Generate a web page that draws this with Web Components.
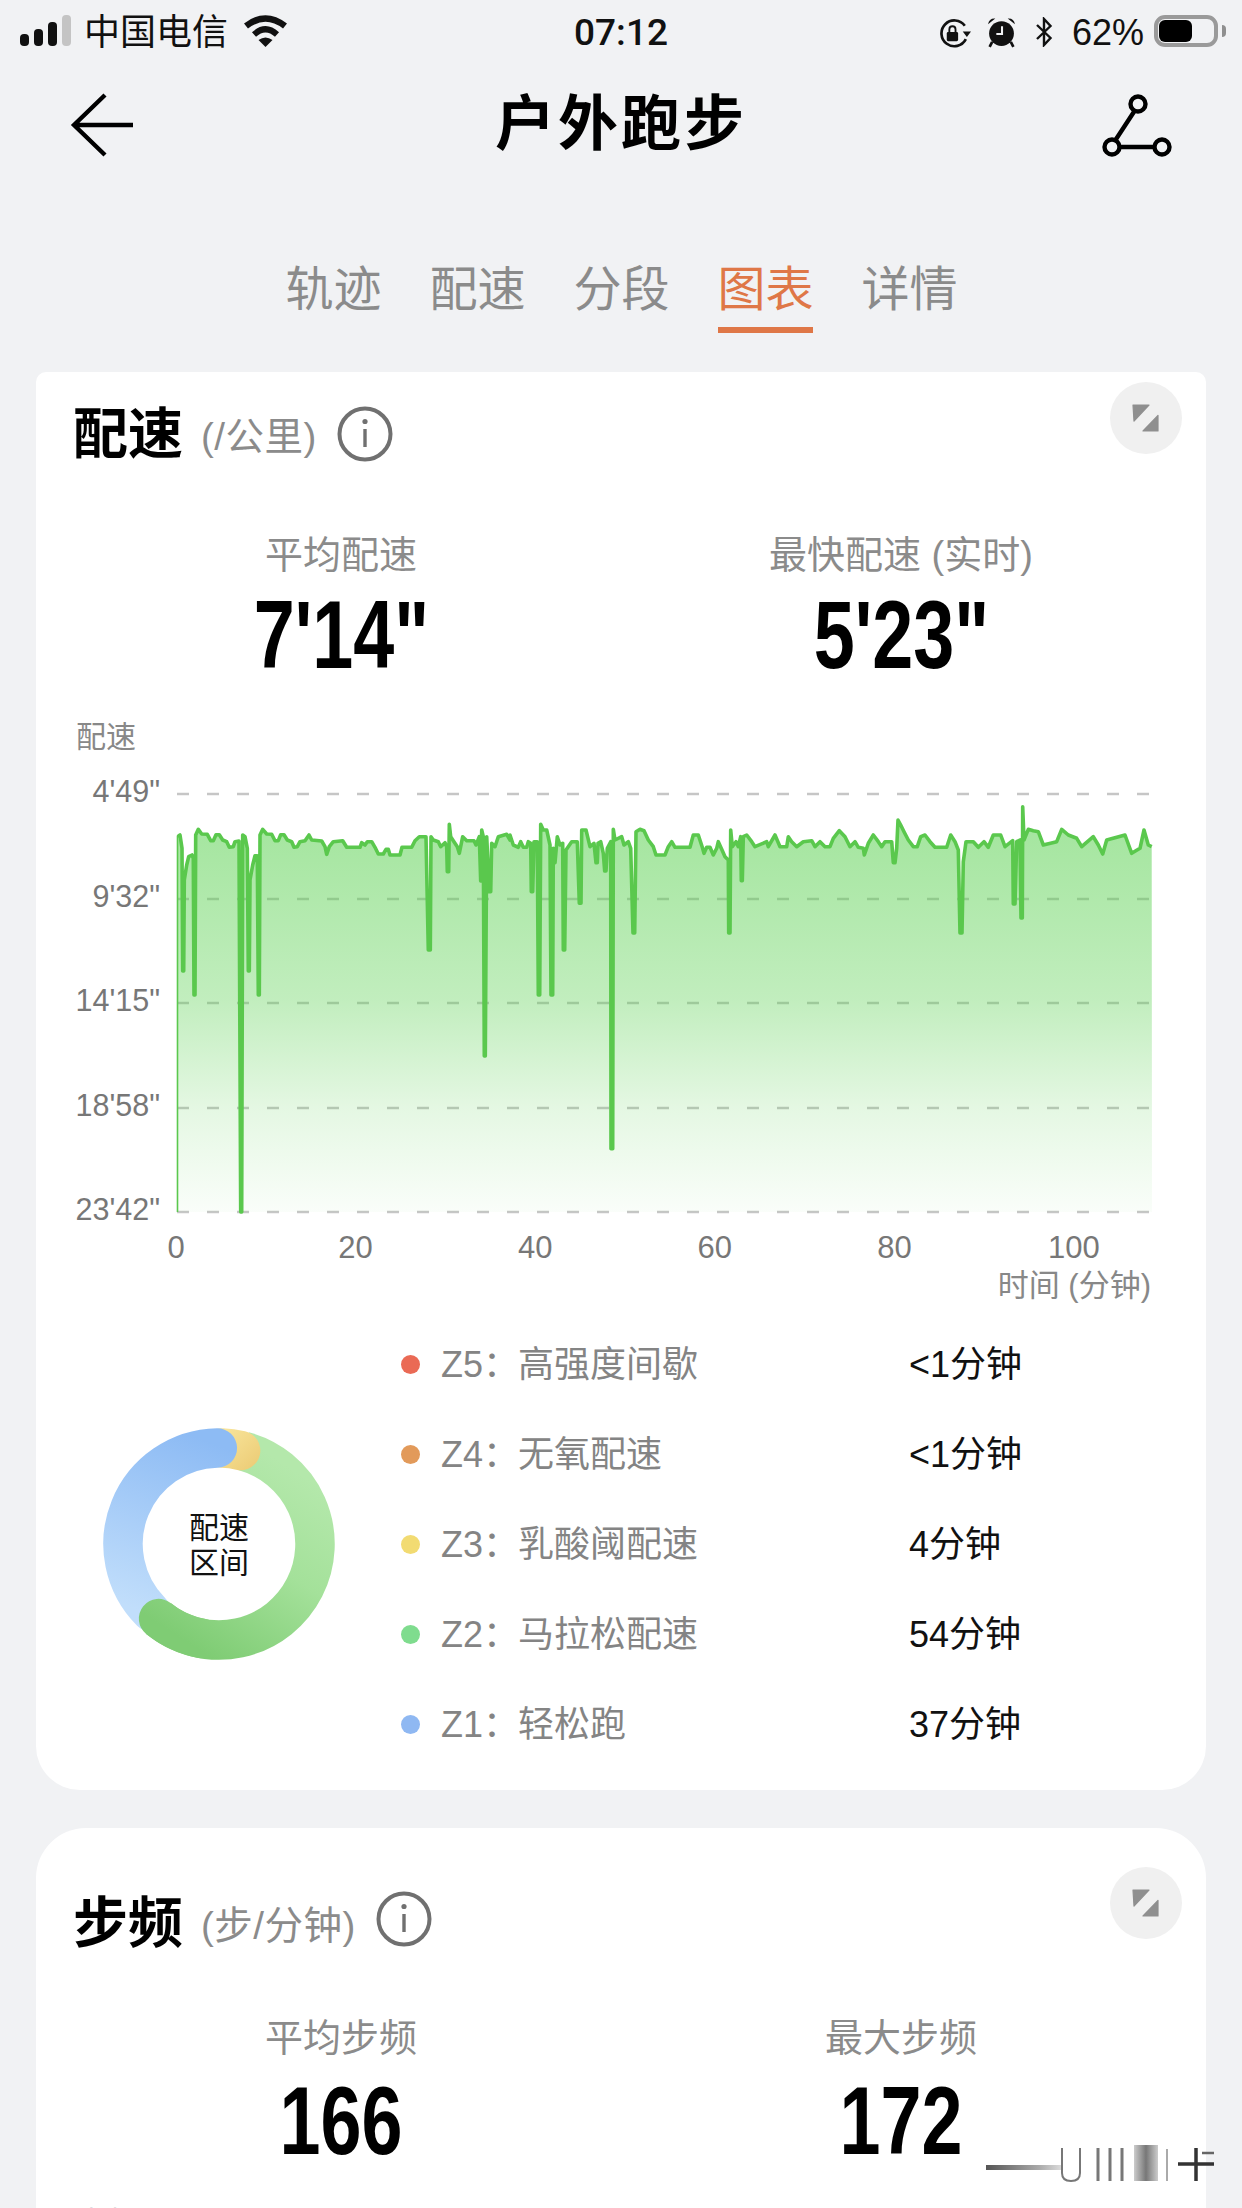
<!DOCTYPE html>
<html lang="zh-CN">
<head>
<meta charset="utf-8">
<title>户外跑步</title>
<style>
    html, body { margin: 0; padding: 0; background: #f1f2f4; }
    body { width: 1242px; height: 2208px; overflow: hidden; font-family: "Liberation Sans", "Noto Sans CJK SC", sans-serif; }
</style>
</head>
<body>
<run-page>
    <status-bar></status-bar>
    <nav-bar>户外跑步</nav-bar>
    <tab-strip tabs="轨迹,配速,分段,图表,详情" active="3"></tab-strip>

    <metric-card style="--card-top:10px; --title-top:22px; --radius-top:10px; --radius-bottom:44px; --stats-gap:66px;">
        <span slot="title">配速</span>
        <span slot="unit">(/公里)</span>
        <stat-item label="平均配速" value="7'14&quot;"></stat-item>
        <stat-item label="最快配速 (实时)" value="5'23&quot;"></stat-item>
        <div slot="body">
            <pace-chart></pace-chart>
            <zone-panel>
                <zone-row color="#ea6a55" zone="Z5" name="高强度间歇" time="&lt;1分钟"></zone-row>
                <zone-row color="#e29a5a" zone="Z4" name="无氧配速" time="&lt;1分钟"></zone-row>
                <zone-row color="#f2db72" zone="Z3" name="乳酸阈配速" time="4分钟"></zone-row>
                <zone-row color="#7fdc8e" zone="Z2" name="马拉松配速" time="54分钟"></zone-row>
                <zone-row color="#8fb8f2" zone="Z1" name="轻松跑" time="37分钟"></zone-row>
            </zone-panel>
        </div>
    </metric-card>

    <metric-card style="--card-top:39px; --title-top:26px; --radius-top:50px; --radius-bottom:0px; --stats-gap:60px; --card-gap:38px; --value-gap:10px; --info-top:-8px;">
        <span slot="title">步频</span>
        <span slot="unit">(步/分钟)</span>
        <stat-item label="平均步频" value="166"></stat-item>
        <stat-item label="最大步频" value="172"></stat-item>
        <div slot="body">
            <axis-title>步频</axis-title>
        </div>
    </metric-card>

    <smudge-mark></smudge-mark>
</run-page>

<script>
(function() {
    const CJK = '"Liberation Sans", "Noto Sans CJK SC", sans-serif';

    class RunPage extends HTMLElement {
        constructor() {
            super();
            this.attachShadow({mode: 'open'});
            this.shadowRoot.innerHTML = `
                <style>
                    :host { display: block; position: relative; width: 1242px; height: 2208px; overflow: hidden; background: #f1f2f4; font-family: ${CJK}; }
                </style>
                <slot></slot>
            `;
        }
    }

    class StatusBar extends HTMLElement {
        constructor() {
            super();
            this.attachShadow({mode: 'open'});
            this.shadowRoot.innerHTML = `
                <style>
                    :host { display: grid; grid-template-columns: 1fr auto 1fr; align-items: center; height: 62px; padding: 0 16px 0 20px; color: #111; }
                    .left, .right { display: flex; align-items: center; }
                    .right { justify-content: flex-end; }
                    .bars { display: flex; align-items: flex-end; gap: 5px; height: 31px; margin-top: -3px; }
                    .bars i { display: block; width: 9px; background: #111; border-radius: 4px; }
                    .carrier { font-size: 36px; line-height: 62px; margin-left: 13px; padding-top: 2px; }
                    .wifi { margin-left: 15px; margin-top: -4px; }
                    .time { font: 500 37px Roboto, sans-serif; margin-left: -4px; }
                    .pct { font-size: 36px; line-height: 62px; margin-left: 19px; padding-top: 2px; }
                    .alarm { margin-left: 16px; }
                    .bt { margin-left: 19px; }
                    .batt { margin-left: 10px; display: flex; align-items: center; }
                    .shell { box-sizing: border-box; width: 64px; height: 32px; border: 4px solid #9a9a9a; border-radius: 11px; padding: 1px; margin-top: -2px; }
                    .shell i { display: block; width: 33px; height: 22px; background: #000; border-radius: 6px; }
                    .nub { width: 4px; height: 12px; margin-left: 4px; background: #8f8f8f; border-radius: 0 4px 4px 0; margin-top: -2px; }
                </style>
                <div class="left">
                    <div class="bars">
                        <i style="height:12px"></i><i style="height:17px"></i><i style="height:24px"></i><i style="height:31px;background:#c4c4c4"></i>
                    </div>
                    <span class="carrier">中国电信</span>
                    <svg class="wifi" width="45" height="33" viewBox="0 0 45 33">
                        <path d="M3 12 Q22.5 -3 42 12" fill="none" stroke="#111" stroke-width="6.5"/>
                        <path d="M11 20.5 Q22.5 10 34 20.5" fill="none" stroke="#111" stroke-width="6"/>
                        <path d="M15.5 26 Q22.5 21 29.5 26 L22.5 33Z" fill="#111"/>
                    </svg>
                </div>
                <span class="time">07:12</span>
                <div class="right">
                    <svg width="33" height="29" viewBox="0 0 32 28" style="margin-top:2px">
                        <path d="M27 19.5 A12.5 12.5 0 1 1 26 6.5" fill="none" stroke="#111" stroke-width="2.6"/>
                        <path d="M24 12 L32 12 L28 17.5Z" fill="#111"/>
                        <rect x="8.5" y="12.5" width="11" height="9" rx="1.4" fill="#111"/>
                        <path d="M11 13 V10 a3 3 0 0 1 6 0 V13" fill="none" stroke="#111" stroke-width="1.8"/>
                    </svg>
                    <svg class="alarm" width="29" height="31" viewBox="0 0 28 30">
                        <circle cx="14" cy="16" r="12" fill="#111"/>
                        <path d="M1 7 Q2 1 8 1.5Z M27 7 Q26 1 20 1.5Z" fill="#111"/>
                        <path d="M5 24 L2.5 29 M23 24 L25.5 29" stroke="#111" stroke-width="2.6"/>
                        <path d="M14.5 9 V16.5 H9" fill="none" stroke="#f1f2f4" stroke-width="2"/>
                    </svg>
                    <svg class="bt" width="18" height="30" viewBox="0 0 18 30">
                        <path d="M2 8 L15.5 21 L9 28 V2 L15.5 9 L2 22" fill="none" stroke="#111" stroke-width="2.4"/>
                    </svg>
                    <span class="pct">62%</span>
                    <div class="batt">
                        <div class="shell"><i></i></div>
                        <div class="nub"></div>
                    </div>
                </div>
            `;
        }
    }

    class NavBar extends HTMLElement {
        constructor() {
            super();
            this.attachShadow({mode: 'open'});
            this.shadowRoot.innerHTML = `
                <style>
                    :host { display: grid; grid-template-columns: 1fr auto 1fr; align-items: center; height: 114px; padding: 6px 70px 0; color: #000; }
                    .title { font-size: 60px; font-weight: 700; letter-spacing: 3px; line-height: 114px; }
                    .back { justify-self: start; }
                    .route { justify-self: end; }
                    svg { display: block; }
                </style>
                <svg class="back" width="66" height="66" viewBox="0 0 66 66">
                    <path d="M35 3 L4 33 L35 63 M4 33 H63" fill="none" stroke="#000" stroke-width="4.4"/>
                </svg>
                <span class="title"><slot></slot></span>
                <svg class="route" width="72" height="66" viewBox="0 0 72 66">
                    <circle cx="38" cy="12" r="7.5" fill="none" stroke="#000" stroke-width="4.4"/>
                    <circle cx="12" cy="55" r="7.5" fill="none" stroke="#000" stroke-width="4.4"/>
                    <circle cx="62" cy="55" r="7.5" fill="none" stroke="#000" stroke-width="4.4"/>
                    <path d="M34.5 19 L15.5 48 M19.5 55 H54.5" fill="none" stroke="#000" stroke-width="4.4"/>
                </svg>
            `;
        }
    }

    class TabStrip extends HTMLElement {
        constructor() {
            super();
            this.attachShadow({mode: 'open'});
        }
        connectedCallback() {
            const active = Number(this.getAttribute('active'));
            const tabs = this.getAttribute('tabs').split(',').map((name, i) =>
                `<div class="tab ${i === active ? 'on' : ''}">${name}</div>`).join('');
            this.shadowRoot.innerHTML = `
                <style>
                    :host { display: flex; justify-content: center; gap: 49px; padding-top: 76px; height: 75px; margin-bottom: 39px; }
                    .tab { width: 95px; height: 75px; box-sizing: border-box; font-size: 48px; line-height: 64px; text-align: center; white-space: nowrap; color: #8b8b8b; }
                    .on { color: #df7747; border-bottom: 6px solid #df7747; }
                </style>
                ${tabs}
            `;
        }
    }

    class MetricCard extends HTMLElement {
        constructor() {
            super();
            this.attachShadow({mode: 'open'});
            this.shadowRoot.innerHTML = `
                <style>
                    :host {
                        display: block; margin: var(--card-gap, 0) 36px 0; padding: var(--card-top) 24px 0 25px;
                        background: #fff; border-radius: var(--radius-top) var(--radius-top) var(--radius-bottom) var(--radius-bottom);
                    }
                    .head { display: flex; justify-content: space-between; align-items: flex-start; }
                    .name { display: flex; align-items: center; margin-top: var(--title-top); padding-left: 12px; height: 60px; }
                    .title { font-size: 55px; font-weight: 700; color: #000; line-height: 60px; }
                    .unit { font-size: 38.5px; color: #8b8b8b; margin: 6px 0 0 18px; line-height: 50px; letter-spacing: .5px; }
                    .info { margin: var(--info-top, 0) 0 0 20px; display: block; }
                    .expand { display: block; }
                    .stats { display: grid; grid-template-columns: 560px 560px; margin-top: var(--stats-gap); }
                </style>
                <div class="head">
                    <div class="name">
                        <span class="title"><slot name="title"></slot></span>
                        <span class="unit"><slot name="unit"></slot></span>
                        <svg class="info" width="56" height="56" viewBox="0 0 56 56">
                            <circle cx="28" cy="28" r="25.5" fill="none" stroke="#707070" stroke-width="4"/>
                            <circle cx="28" cy="15.5" r="2.6" fill="#707070"/>
                            <path d="M28 23 V41" stroke="#707070" stroke-width="3.4"/>
                        </svg>
                    </div>
                    <svg class="expand" width="72" height="72" viewBox="0 0 72 72">
                        <circle cx="36" cy="36" r="36" fill="#f0f0f0"/>
                        <path d="M23 23 H39 L24 39Z M48 33.5 V49 H33Z" fill="#8f8f8f" stroke="#8f8f8f" stroke-width="1.2" stroke-linejoin="round"/>
                    </svg>
                </div>
                <div class="stats"><slot></slot></div>
                <slot name="body"></slot>
            `;
        }
    }

    class StatItem extends HTMLElement {
        constructor() {
            super();
            this.attachShadow({mode: 'open'});
        }
        connectedCallback() {
            this.shadowRoot.innerHTML = `
                <style>
                    :host { display: block; text-align: center; }
                    .label { font-size: 38px; line-height: 50px; color: #8b8b8b; }
                    .value { font-weight: 700; font-size: 97px; line-height: 96px; color: #000; margin-top: var(--value-gap, 7px); }
                    .value span { display: inline-block; transform: scaleX(.76); }
                </style>
                <div class="label">${this.getAttribute('label')}</div>
                <div class="value"><span>${this.getAttribute('value')}</span></div>
            `;
        }
    }

    class AxisTitle extends HTMLElement {
        constructor() {
            super();
            this.attachShadow({mode: 'open'});
            this.shadowRoot.innerHTML = `
                <style>
                    :host { display: block; font-size: 30px; line-height: 40px; color: #888; margin: 34px 0 0 15px; }
                </style>
                <slot></slot>
            `;
        }
    }

    // line traced off the reference, x/y as crop px (3x) relative to the crop's corner
    const SEG_A = [[23,140],[30,135],[36,175],[38,543],[41,543],[43,270],[50,225],[56,200],[66,195],[70,205],[72,615],[75,615],[77,135],[85,118],[95,132],[112,133],[122,152],[130,152],[138,134],[148,134],[158,150],[170,155],[178,172],[190,170],[195,155],[207,153],[212,1266],[215,1266],[218,135],[225,140],[232,175],[235,543],[238,543],[240,270],[248,225],[255,197],[262,197],[265,615],[268,615],[270,135],[278,118],[290,132],[305,133],[315,152],[325,152],[332,134],[342,134],[352,150],[365,155],[372,172],[382,170],[390,155],[405,152],[417,135],[425,150],[455,153],[465,170],[470,193],[478,170],[490,155],[518,152],[530,172],[570,172],[575,158],[585,165],[592,155],[605,155],[615,172],[625,192],[640,192],[648,178],[655,178],[660,195],[690,195],[696,172],[725,172],[735,152],[748,140],[768,140],[775,480],[781,480],[783,140],[790,150],[805,155],[812,170],[825,158],[830,170],[832,245],[836,245],[838,103],[842,140],[850,152],[862,170],[868,190],[878,140],[890,152],[912,152],[918,165],[928,140],[932,273],[935,120],[940,140],[943,798],[946,798],[950,140],[958,305],[962,305],[965,160],[975,170],[985,140],[1010,133],[1020,150]];
    const SEG_B = [[30,135],[40,165],[55,172],[62,155],[70,172],[80,172],[85,155],[92,160],[94,305],[98,305],[102,155],[112,155],[115,615],[119,615],[122,103],[130,120],[140,120],[150,165],[153,615],[158,615],[160,175],[165,218],[172,140],[180,165],[188,160],[190,480],[194,480],[198,180],[215,155],[232,155],[238,340],[243,340],[245,120],[258,120],[270,170],[282,160],[288,218],[292,218],[294,160],[302,155],[310,190],[314,243],[318,243],[322,175],[332,155],[333,1076],[338,1076],[340,118],[345,150],[365,140],[372,165],[385,155],[392,175],[399,429],[404,429],[408,125],[420,118],[432,122],[445,150],[460,170],[468,195],[495,195],[505,170],[515,155],[525,172],[570,172],[580,135],[595,135],[607,172],[612,190],[620,172],[630,172],[640,195],[650,175],[655,155],[665,178],[675,200],[685,210],[686,429],[690,429],[692,120],[697,170],[708,155],[715,170],[722,140],[724,272],[727,272],[730,140],[740,135],[755,155],[765,170],[800,155],[805,170],[825,135],[840,170],[860,170],[865,140],[875,155],[890,170],[910,155],[935,152],[945,170],[960,155],[975,170],[985,170]];
    const SEG_C = [[0,170],[10,145],[28,122],[45,140],[60,170],[75,155],[85,172],[100,175],[103,195],[115,160],[130,135],[145,155],[155,170],[165,155],[185,155],[190,218],[195,218],[200,175],[204,90],[212,105],[222,125],[235,150],[250,170],[262,170],[272,140],[285,135],[300,155],[315,172],[350,172],[362,135],[375,155],[385,180],[390,429],[396,429],[400,215],[408,155],[430,155],[445,172],[462,155],[475,172],[490,135],[512,135],[525,170],[548,152],[550,342],[555,342],[560,155],[570,150],[573,384],[577,384],[578,50],[582,150],[595,118],[610,122],[625,125],[640,165],[680,155],[695,118],[715,135],[740,145],[755,170],[790,140],[805,165],[818,192],[830,150],[885,135],[905,190],[930,175],[942,120],[955,165],[965,170]];

    class PaceChart extends HTMLElement {
        constructor() {
            super();
            this.attachShadow({mode: 'open'});
            const toPage = (seg, x0) => seg.map(p => [x0 + p[0] / 3, 790 + p[1] / 3]);
            const pts = [...toPage(SEG_A, 170), ...toPage(SEG_B, 500), ...toPage(SEG_C, 830)];
            const line = pts.map(p => p[0].toFixed(1) + ',' + p[1].toFixed(1)).join(' ');
            const grid = [794, 899, 1003, 1108, 1212].map(y =>
                `<line x1="177" x2="1150" y1="${y}" y2="${y}"/>`).join('');
            const yLabels = ['4\'49"', '9\'32"', '14\'15"', '18\'58"', '23\'42"'].map(t => `<span>${t}</span>`).join('');
            const xLabels = [0, 20, 40, 60, 80, 100].map(t => `<span>${t}</span>`).join('');
            this.shadowRoot.innerHTML = `
                <style>
                    :host { display: block; color: #777; }
                    .plot { display: grid; grid-template-columns: 99px 990px; column-gap: 10px; margin-top: 16px; height: 454px; }
                    .yaxis { display: flex; flex-direction: column; justify-content: space-between; align-items: flex-end; font-size: 30.5px; line-height: 36px; }
                    svg { display: block; }
                    .xaxis { display: flex; justify-content: space-between; margin: 3px 0 0 115px; width: 898px; font-size: 31px; line-height: 36px; }
                    .xaxis span { width: 0; display: flex; justify-content: center; }
                    .xname { text-align: right; padding-right: 31px; margin-top: 2px; font-size: 31px; line-height: 36px; color: #888; }
                </style>
                <axis-title>配速</axis-title>
                <div class="plot">
                    <div class="yaxis">${yLabels}</div>
                    <svg width="990" height="454" viewBox="170 773 990 454">
                        <defs>
                            <linearGradient id="fade" gradientUnits="userSpaceOnUse" x1="0" y1="810" x2="0" y2="1212">
                                <stop offset="0" stop-color="rgb(88,208,78)" stop-opacity=".56"/>
                                <stop offset=".47" stop-color="rgb(88,208,78)" stop-opacity=".37"/>
                                <stop offset=".74" stop-color="rgb(88,208,78)" stop-opacity=".16"/>
                                <stop offset="1" stop-color="rgb(88,208,78)" stop-opacity=".03"/>
                            </linearGradient>
                        </defs>
                        <g stroke="#c6c6c6" stroke-width="2.6" stroke-dasharray="12 18">${grid}</g>
                        <polygon points="177,1212 ${line} 1152,1212" fill="url(#fade)"/>
                        <line x1="177.5" x2="177.5" y1="1212" y2="836" stroke="#5ac84d" stroke-width="1.6"/>
                        <polyline points="${line}" fill="none" stroke="#5ac84d" stroke-width="3.6" stroke-linejoin="round"/>
                    </svg>
                </div>
                <div class="xaxis">${xLabels}</div>
                <div class="xname">时间 (分钟)</div>
            `;
        }
    }

    class ZonePanel extends HTMLElement {
        constructor() {
            super();
            this.attachShadow({mode: 'open'});
            this.shadowRoot.innerHTML = `
                <style>
                    :host { display: flex; align-items: center; margin-top: 15px; padding-bottom: 21px; }
                    .donut { position: relative; width: 240px; height: 240px; margin: 0 62px 0 38px; flex: none; }
                    svg { display: block; }
                    .mid { position: absolute; inset: 0; display: flex; align-items: center; justify-content: center; text-align: center; font-size: 30px; line-height: 35px; color: #111; padding-top: 2px; }
                    .rows { display: block; }
                </style>
                <div class="donut">
                    <svg width="240" height="240" viewBox="0 0 240 240">
                        <defs>
                            <linearGradient id="g" gradientUnits="userSpaceOnUse" x1="170" y1="30" x2="60" y2="200">
                                <stop offset="0" stop-color="#b4e8ab"/><stop offset=".45" stop-color="#a4e19a"/><stop offset="1" stop-color="#7fcc74"/>
                            </linearGradient>
                            <linearGradient id="b" gradientUnits="userSpaceOnUse" x1="50" y1="190" x2="115" y2="20">
                                <stop offset="0" stop-color="#c1defb"/><stop offset="1" stop-color="#8dbbf4"/>
                            </linearGradient>
                            <linearGradient id="y" gradientUnits="userSpaceOnUse" x1="120" y1="10" x2="165" y2="60">
                                <stop offset="0" stop-color="#f8e49a"/><stop offset="1" stop-color="#e8c46a"/>
                            </linearGradient>
                        </defs>
                        ${arc(15, 219, 'url(#g)', 'butt')}
                        ${arc(2, 13, 'url(#y)', 'round')}
                        ${arc(225, 359, 'url(#b)', 'round')}
                        ${arc(190, 219, 'url(#g)', 'round')}
                    </svg>
                    <div class="mid"><div>配速<br>区间</div></div>
                </div>
                <div class="rows"><slot></slot></div>
            `;
        }
    }

    // angle in degrees, clockwise from 12 o'clock
    function arc(from, to, stroke, cap) {
        const pt = a => {
            const r = a * Math.PI / 180;
            return (120 + 96 * Math.sin(r)).toFixed(2) + ' ' + (120 - 96 * Math.cos(r)).toFixed(2);
        };
        const large = to - from > 180 ? 1 : 0;
        return `<path d="M${pt(from)} A96 96 0 ${large} 1 ${pt(to)}" fill="none" stroke="${stroke}" stroke-width="39.5" stroke-linecap="${cap}"/>`;
    }

    class ZoneRow extends HTMLElement {
        constructor() {
            super();
            this.attachShadow({mode: 'open'});
        }
        connectedCallback() {
            this.shadowRoot.innerHTML = `
                <style>
                    :host { display: grid; grid-template-columns: 40px 77px 391px auto; align-items: center; height: 90px; font-size: 36px; color: #848484; white-space: nowrap; }
                    i { display: block; width: 19px; height: 19px; border-radius: 50%; background: ${this.getAttribute('color')}; }
                    span { padding-bottom: 7px; }
                    .time { color: #111; }
                </style>
                <i></i>
                <span>${this.getAttribute('zone')}：</span>
                <span>${this.getAttribute('name')}</span>
                <span class="time">${this.getAttribute('time').replace('<', '&lt;')}</span>
            `;
        }
    }

    class SmudgeMark extends HTMLElement {
        constructor() {
            super();
            this.attachShadow({mode: 'open'});
            this.shadowRoot.innerHTML = `
                <style>
                    :host { position: absolute; left: 986px; top: 2145px; width: 228px; height: 40px; }
                    svg { display: block; filter: blur(.7px); }
                </style>
                <svg width="228" height="40" viewBox="0 0 228 40">
                    <defs>
                        <linearGradient id="s" x1="0" x2="1" y1="0" y2="0">
                            <stop offset="0" stop-color="#555"/><stop offset=".7" stop-color="#aaa"/><stop offset="1" stop-color="#ddd"/>
                        </linearGradient>
                        <linearGradient id="t" x1="0" x2="1" y1="0" y2="0">
                            <stop offset="0" stop-color="#ccc"/><stop offset=".5" stop-color="#777"/><stop offset="1" stop-color="#ccc"/>
                        </linearGradient>
                    </defs>
                    <rect x="0" y="20" width="76" height="5" fill="url(#s)"/>
                    <path d="M76 3 V28 q0 8 9 8 q9 0 9 -8 V3" fill="none" stroke="#777" stroke-width="2"/>
                    <path d="M112 3 V36 M124 3 V36 M136 3 V36" stroke="#777" stroke-width="3"/>
                    <rect x="148" y="0" width="24" height="36" fill="url(#t)"/>
                    <rect x="180" y="4" width="2" height="32" fill="#aaa"/>
                    <path d="M210 3 V36 M192 19 H228" stroke="#333" stroke-width="3.5"/>
                    <path d="M216 8 H228" stroke="#666" stroke-width="2.5"/>
                </svg>
            `;
        }
    }

    window.customElements.define('run-page', RunPage);
    window.customElements.define('status-bar', StatusBar);
    window.customElements.define('nav-bar', NavBar);
    window.customElements.define('tab-strip', TabStrip);
    window.customElements.define('metric-card', MetricCard);
    window.customElements.define('stat-item', StatItem);
    window.customElements.define('axis-title', AxisTitle);
    window.customElements.define('pace-chart', PaceChart);
    window.customElements.define('zone-panel', ZonePanel);
    window.customElements.define('zone-row', ZoneRow);
    window.customElements.define('smudge-mark', SmudgeMark);
})();
</script>
</body>
</html>
